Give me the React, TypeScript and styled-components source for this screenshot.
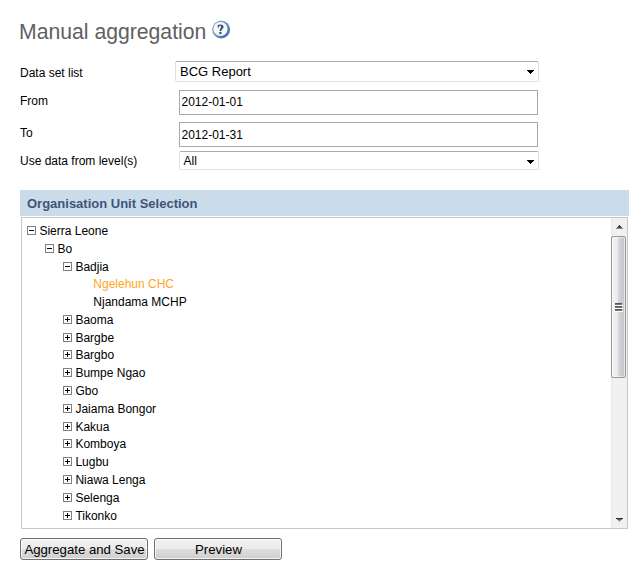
import React from "react";
import styled, { createGlobalStyle } from "styled-components";

const GlobalStyle = createGlobalStyle`
  * { box-sizing: border-box; }
  body {
    margin: 0;
    background: #fff;
    color: #000;
    font: 12px "Liberation Sans", Arial, sans-serif;
  }
`;

const Page = styled.main`
  width: 643px;
  height: 573px;
  padding: 18px 14px 0 20px;
  overflow: hidden;
`;

const Heading = styled.header`
  display: flex;
  height: 43px;
  gap: 5px;
`;

const Title = styled.h1`
  width: 188px;
  margin: 0 0 0 -1px;
  color: #606060;
  font-size: 21.2px;
  font-weight: normal;
  line-height: 28px;
  white-space: nowrap;
`;

const HelpIcon = styled.svg`
  display: block;
  margin-top: 2px;
`;

const FormRow = styled.div<{ $height: number; $indent: number }>`
  display: flex;
  height: ${(p) => p.$height}px;
  gap: ${(p) => p.$indent}px;
`;

const Label = styled.label<{ $top: number }>`
  width: 150px;
  padding-top: ${(p) => p.$top}px;
  line-height: 14px;
`;

const SelectBox = styled.div<{ $width: number; $height: number; $size: number; $pad: number }>`
  display: flex;
  align-items: center;
  justify-content: space-between;
  width: ${(p) => p.$width}px;
  height: ${(p) => p.$height}px;
  padding: 0 4px 0 ${(p) => p.$pad}px;
  border: 1px solid #e0e0ea;
  border-top-color: #abadb3;
  border-radius: 2px;
  font-size: ${(p) => p.$size}px;
  line-height: 16px;
`;

const DropIcon = styled.svg<{ $drop: number }>`
  display: block;
  margin-top: ${(p) => p.$drop}px;
`;

const DateInput = styled.input<{ $lift?: number }>`
  width: 359px;
  height: 25px;
  padding: 0 2px ${(p) => p.$lift ?? 0}px 1.5px;
  border: 1px solid #a9a9a9;
  outline: 0;
  background: #fff;
  color: #000;
  font: 12px "Liberation Sans", Arial, sans-serif;
`;

const PanelTitle = styled.h2`
  height: 26px;
  margin: 20px 0 0;
  padding-left: 7px;
  background: #cadcea;
  color: #3f5478;
  font-size: 13px;
  font-weight: bold;
  line-height: 27px;
`;

const TreeBox = styled.section`
  display: flex;
  justify-content: space-between;
  width: 607px;
  height: 312px;
  margin: 1px 0 0 1px;
  border: 1px solid #c8c8c8;
`;

const Tree = styled.div`
  padding: 4px 0 0 5px;
`;

const TreeRow = styled.div<{ $depth: number; $tight: boolean; $selected?: boolean }>`
  display: flex;
  align-items: flex-start;
  gap: 3.4px;
  height: ${(p) => (p.$tight ? 17 : 18)}px;
  padding-left: ${(p) => p.$depth * 18}px;
  color: ${(p) => (p.$selected ? "#ffa51f" : "#000")};
  line-height: 18px;
  white-space: nowrap;
`;

const ToggleIcon = styled.svg`
  display: block;
  flex: none;
  margin-top: 4px;
`;

const Leaf = styled.span`
  padding-left: 12.3px;
`;

const Scrollbar = styled.div`
  display: flex;
  flex-direction: column;
  width: 16px;
  background: linear-gradient(to right, #e8e8e8, #f1f1f1 15%, #f0f0f0);
`;

const ScrollArrow = styled.svg`
  display: block;
  flex: none;
`;

const Thumb = styled.div`
  display: flex;
  align-items: center;
  justify-content: center;
  width: 15px;
  height: 142px;
  margin-bottom: auto;
  border: 1px solid #979797;
  border-radius: 2px;
  background: linear-gradient(to right, #f4f4f4, #e9e9eb 47%, #d5d5da 50%, #c5c5cc 90%, #e3e3e6);
  box-shadow: inset 0 0 0 1px rgba(255, 255, 255, 0.45);
`;

const Actions = styled.div`
  display: flex;
  gap: 6px;
  margin-top: 9px;
`;

const Button = styled.button`
  width: 128px;
  height: 22px;
  padding: 1px 0 0 1px;
  border: 1px solid #707070;
  border-radius: 3px;
  background: linear-gradient(#f2f2f2, #ebebeb 48%, #dddddd 50%, #cfcfcf);
  box-shadow: inset 0 0 0 1px rgba(255, 255, 255, 0.75);
  color: #000;
  font: 13.2px/19px "Liberation Sans", Arial, sans-serif;
  white-space: nowrap;
`;

type Unit = { name: string; depth: number; state: "open" | "closed" | "leaf"; selected?: boolean };

const units: Unit[] = [
  { name: "Sierra Leone", depth: 0, state: "open" },
  { name: "Bo", depth: 1, state: "open" },
  { name: "Badjia", depth: 2, state: "open" },
  { name: "Ngelehun CHC", depth: 3, state: "leaf", selected: true },
  { name: "Njandama MCHP", depth: 3, state: "leaf" },
  ...[
    "Baoma", "Bargbe", "Bargbo", "Bumpe Ngao", "Gbo", "Jaiama Bongor",
    "Kakua", "Komboya", "Lugbu", "Niawa Lenga", "Selenga", "Tikonko",
  ].map((name): Unit => ({ name, depth: 2, state: "closed" })),
];

// Rows one pixel shorter than the rest, keeping the average pitch at 17.8px.
const tightRows = new Set([2, 6, 11]);

const Help = () => (
  <HelpIcon width="19" height="19" viewBox="0 0 19 19">
    <defs>
      <linearGradient id="ring" x1="0" y1="0" x2="1" y2="1">
        <stop offset="0" stopColor="#9dbde3" />
        <stop offset="0.6" stopColor="#5a87c2" />
        <stop offset="1" stopColor="#345f9f" />
      </linearGradient>
    </defs>
    <circle cx="9.1" cy="9.5" r="9" fill="url(#ring)" />
    <circle cx="8.5" cy="9" r="7.1" fill="#f5f7fb" />
    <path d="M5.7 7.4V5.3C7 4 11.6 3.9 11.6 6.8C11.6 8.9 9.4 9.2 9.3 11.1H7.5C7.5 9.2 9 8.6 9 6.8C9 5.5 7.6 5.4 7.1 6.1V7.4Z" fill="#454d59" />
    <circle cx="8.4" cy="13.1" r="1.25" fill="#454d59" />
  </HelpIcon>
);

const DropArrow = ({ drop = 0 }: { drop?: number }) => (
  <DropIcon $drop={drop} width="7" height="4" viewBox="0 0 7 4" shapeRendering="crispEdges">
    <path d="M0 0H7V1H6V2H5V3H4V4H3V3H2V2H1V1H0Z" />
  </DropIcon>
);

const Toggle = ({ closed }: { closed: boolean }) => (
  <ToggleIcon width="9" height="9" viewBox="0 0 9 9" shapeRendering="crispEdges">
    <path d="M.5.5H8.5V8.5H.5Z" fill="#fff" stroke="#808080" />
    <path d={closed ? "M2 4.5H7M4.5 2V7" : "M2 4.5H7"} stroke="#000" />
  </ToggleIcon>
);

export default function App() {
  return (
    <>
      <GlobalStyle />
      <Page>
        <Heading>
          <Title>Manual aggregation</Title>
          <Help />
        </Heading>
        <FormRow $height={29} $indent={5}>
          <Label $top={5}>Data set list</Label>
          <SelectBox $width={364} $height={21} $size={13} $pad={4}>BCG Report<DropArrow /></SelectBox>
        </FormRow>
        <FormRow $height={32} $indent={9}>
          <Label $top={4} htmlFor="from">From</Label>
          <DateInput id="from" $lift={2} defaultValue="2012-01-01" />
        </FormRow>
        <FormRow $height={29} $indent={9}>
          <Label $top={4} htmlFor="to">To</Label>
          <DateInput id="to" defaultValue="2012-01-31" />
        </FormRow>
        <FormRow $height={19} $indent={9}>
          <Label $top={3}>Use data from level(s)</Label>
          <SelectBox $width={360} $height={19} $size={12} $pad={3.6}>All<DropArrow drop={2} /></SelectBox>
        </FormRow>
        <PanelTitle>Organisation Unit Selection</PanelTitle>
        <TreeBox>
          <Tree>
            {units.map((unit, index) => (
              <TreeRow
                key={unit.name}
                $depth={unit.depth}
                $tight={tightRows.has(index)}
                $selected={unit.selected}
              >
                {unit.state === "leaf" ? <Leaf>{unit.name}</Leaf> : (
                  <><Toggle closed={unit.state === "closed"} />{unit.name}</>
                )}
              </TreeRow>
            ))}
          </Tree>
          <Scrollbar>
            <ScrollArrow width="16" height="18" viewBox="0 0 16 18" shapeRendering="crispEdges">
              <path d="M8 7H9V8H10V9H7V8H8Z" fill="#333" />
              <path d="M6 9H11V10H6Z" fill="#555" />
              <path d="M5 10H12V11H5Z" fill="#888" />
            </ScrollArrow>
            <Thumb>
              <svg width="8" height="9" viewBox="0 0 8 9" shapeRendering="crispEdges">
                <path d="M0 2.5H8M0 5.5H8M0 8.5H8" stroke="#fff" />
                <path d="M0 1.5H7M0 4.5H7M0 7.5H7" stroke="#777" />
                <path d="M0 .5H7M0 3.5H7M0 6.5H7" stroke="#555" />
              </svg>
            </Thumb>
            <ScrollArrow width="16" height="18" viewBox="0 0 16 18" shapeRendering="crispEdges">
              <path d="M5 8H12V9H5Z" fill="#333" />
              <path d="M6 9H11V10H6Z" fill="#666" />
              <path d="M7 10H10V11H9V12H8V11H7Z" fill="#999" />
            </ScrollArrow>
          </Scrollbar>
        </TreeBox>
        <Actions>
          <Button>Aggregate and Save</Button>
          <Button>Preview</Button>
        </Actions>
      </Page>
    </>
  );
}
